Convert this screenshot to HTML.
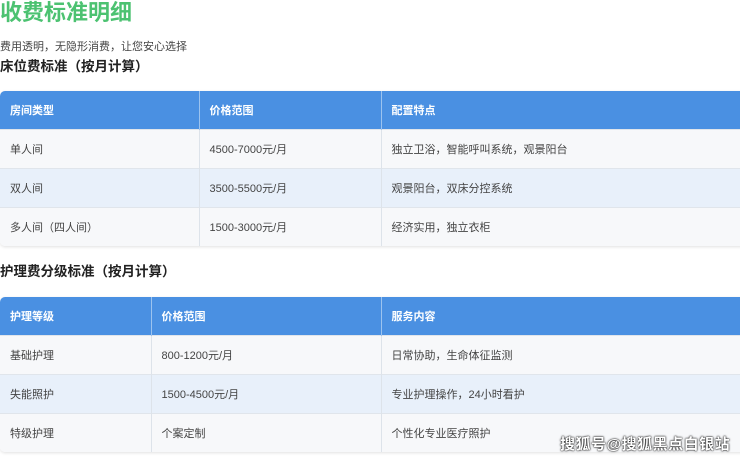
<!DOCTYPE html>
<html><head><meta charset="utf-8"><style>
*{margin:0;padding:0;box-sizing:border-box}
body{width:740px;height:459px;overflow:hidden;background:#fff;font-family:"Liberation Sans","Noto Sans CJK SC",sans-serif;color:#333;position:relative}
h1{position:absolute;left:0;top:0;font-size:22px;color:#4cc271;font-weight:bold;line-height:26px}
.sub{position:absolute;left:0;top:40px;font-size:11px;line-height:14px;color:#444}
h2{position:absolute;left:0;font-size:13.5px;font-weight:bold;line-height:18px;color:#222}
table{position:absolute;left:0;width:746px;border-collapse:collapse;font-size:11px;border-radius:5px;overflow:hidden;box-shadow:0 1px 3px rgba(0,0,0,.12)}
th{background:#4a90e2;color:#fff;text-align:left;font-weight:bold;height:38px;padding-left:10px;border-right:1px solid #9cc3ef}
td{height:39px;padding-left:10px;border-right:1px solid #dde3ea;border-top:1px solid #e0e5eb;color:#444}
tr:nth-child(even) td{background:#f7f8fa}
tr:nth-child(odd) td{background:#e8f0fa}
.wm{position:absolute;left:560px;top:433px;font-size:15px;color:#fff;font-weight:bold;text-shadow:0 0 2px #000,0 0 1px #000;letter-spacing:0.5px}
</style></head><body>
<h1>收费标准明细</h1>
<div class="sub">费用透明，无隐形消费，让您安心选择</div>
<h2 style="top:58px">床位费标准（按月计算）</h2>
<table style="top:91px">
<tr><th style="width:199px">房间类型</th><th style="width:182px">价格范围</th><th>配置特点</th></tr>
<tr><td>单人间</td><td>4500-7000元/月</td><td>独立卫浴，智能呼叫系统，观景阳台</td></tr>
<tr><td>双人间</td><td>3500-5500元/月</td><td>观景阳台，双床分控系统</td></tr>
<tr><td>多人间（四人间）</td><td>1500-3000元/月</td><td>经济实用，独立衣柜</td></tr>
</table>
<h2 style="top:263px">护理费分级标准（按月计算）</h2>
<table style="top:297px">
<tr><th style="width:151px">护理等级</th><th style="width:230px">价格范围</th><th>服务内容</th></tr>
<tr><td>基础护理</td><td>800-1200元/月</td><td>日常协助，生命体征监测</td></tr>
<tr><td>失能照护</td><td>1500-4500元/月</td><td>专业护理操作，24小时看护</td></tr>
<tr><td>特级护理</td><td>个案定制</td><td>个性化专业医疗照护</td></tr>
</table>
<div class="wm">搜狐号@搜狐黑点白银站</div>
</body></html>
